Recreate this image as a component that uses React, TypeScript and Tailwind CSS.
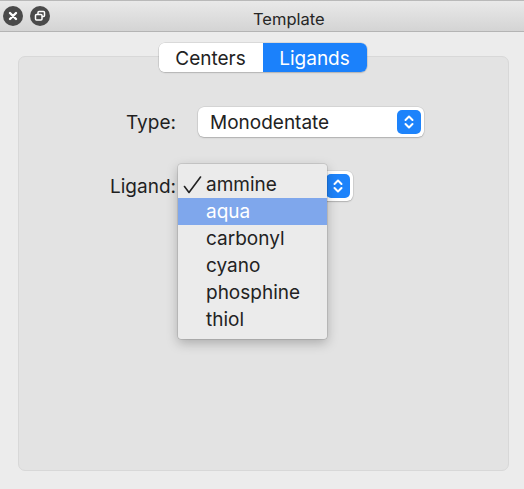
import { useState } from 'react';

const ligands = ['ammine', 'aqua', 'carbonyl', 'cyano', 'phosphine', 'thiol'];

function Stepper() {
  return (
    <div className="w-[24px] h-[24px] rounded-[5px] bg-[#1d83fb] flex items-center justify-center">
      <svg width="12" height="16" viewBox="0 0 12 16" fill="none" stroke="white" strokeWidth="2" strokeLinecap="round" strokeLinejoin="round">
        <path d="M2.5 6 L6 2.5 L9.5 6" />
        <path d="M2.5 10 L6 13.5 L9.5 10" />
      </svg>
    </div>
  );
}

function PopUp({ value, width, covered }: { value: string; width: string; covered?: boolean }) {
  return (
    <div
      className={`${width} h-[30px] bg-white rounded-[6px] shadow-[0_0_0_0.5px_rgba(0,0,0,0.12),0_1px_1.5px_rgba(0,0,0,0.18)] flex items-center justify-between pl-[12px] pr-[3px]`}
    >
      {/* the open menu lies over the ligand popup's text */}
      <span className={`text-[19px] pt-[2px] text-[#222] ${covered ? 'invisible' : ''}`}>{value}</span>
      <Stepper />
    </div>
  );
}

export default function App() {
  const [tab, setTab] = useState('Ligands');
  const [hover, setHover] = useState('aqua');

  return (
    <div
      className="w-[524px] h-[489px] bg-[#ececec] relative overflow-hidden text-[#1f1f1f]"
      style={{ fontFamily: 'Inter, "Noto Sans", sans-serif' }}
    >
      {/* title bar */}
      <div className="h-[32px] border-t border-t-[#b9b9b9] border-b border-b-[#b4b4b4] bg-gradient-to-b from-[#e9e9e9] to-[#d4d4d4] relative flex items-center">
        <div className="flex gap-[7px] pl-[3px]">
          <div className="w-[20px] h-[20px] rounded-full bg-[#4a4a4a] flex items-center justify-center">
            <svg width="10" height="10" viewBox="0 0 10 10" stroke="white" strokeWidth="2.4" strokeLinecap="round">
              <path d="M2 2 L8 8 M8 2 L2 8" />
            </svg>
          </div>
          <div className="w-[20px] h-[20px] rounded-full bg-[#4a4a4a] flex items-center justify-center">
            <svg width="12" height="12" viewBox="0 0 12 12" fill="none" stroke="white" strokeWidth="1.5">
              <rect x="4" y="1.5" width="6.5" height="5" rx="1" />
              <rect x="1.5" y="4.5" width="6.5" height="5.5" rx="1" fill="#4a4a4a" />
            </svg>
          </div>
        </div>
        <span className="absolute left-[253px] top-[6px] text-[16.5px] text-[#262626]">Template</span>
      </div>

      {/* segmented control */}
      <div className="pt-[11px] flex justify-center relative z-10">
        <div className="flex h-[29px] rounded-[6px] bg-white shadow-[0_0_0_0.5px_rgba(0,0,0,0.15),0_1px_1.5px_rgba(0,0,0,0.15)] overflow-hidden ml-[1px]">
          {['Centers', 'Ligands'].map((t) => (
            <button
              key={t}
              onClick={() => setTab(t)}
              className={`w-[104px] text-[19px] pt-[3px] flex items-center justify-center ${
                tab === t ? 'bg-[#1b81fb] text-white' : 'bg-white text-[#222]'
              }`}
            >
              {t}
            </button>
          ))}
        </div>
      </div>

      {/* tab panel */}
      <div className="-mt-[16px] h-[415px] ml-[18px] w-[491px] rounded-[7px] bg-[#e3e3e3] border border-[#d8d8d8] pt-[50px]">
        <div className="flex items-center">
          <span className="w-[157px] text-right text-[19px] pt-[2px]">Type:</span>
          <div className="ml-[22px]">
            <PopUp value="Monodentate" width="w-[226px]" />
          </div>
        </div>
        <div className="flex items-center mt-[33px]">
          <span className="w-[157px] text-right text-[19px] pt-[2px]">Ligand:</span>
          <div className="ml-[22px]">
            <PopUp value="ammine" width="w-[155px]" covered />
          </div>
        </div>
      </div>

      {/* open menu */}
      <div className="absolute left-[178px] top-[164px] w-[149px] bg-[#ebebeb] rounded-[3px] shadow-[0_0_0_0.5px_rgba(0,0,0,0.18),0_4px_12px_rgba(0,0,0,0.25)] pt-[7px] pb-[6px]">
        {ligands.map((l) => (
          <div
            key={l}
            onMouseEnter={() => setHover(l)}
            className={`h-[27px] flex items-center relative pl-[28px] pt-[2px] text-[19px] ${
              hover === l ? 'bg-[#7fa7ec] text-white' : 'text-[#222]'
            }`}
          >
            {l === 'ammine' && (
              <svg className="absolute left-[5px] top-[5px]" width="19" height="18" viewBox="0 0 19 18" fill="none" stroke="#222" strokeWidth="1.6" strokeLinecap="round" strokeLinejoin="round">
                <path d="M1.5 10.5 L6 16.5 L17.5 1" />
              </svg>
            )}
            {l}
          </div>
        ))}
      </div>
    </div>
  );
}
